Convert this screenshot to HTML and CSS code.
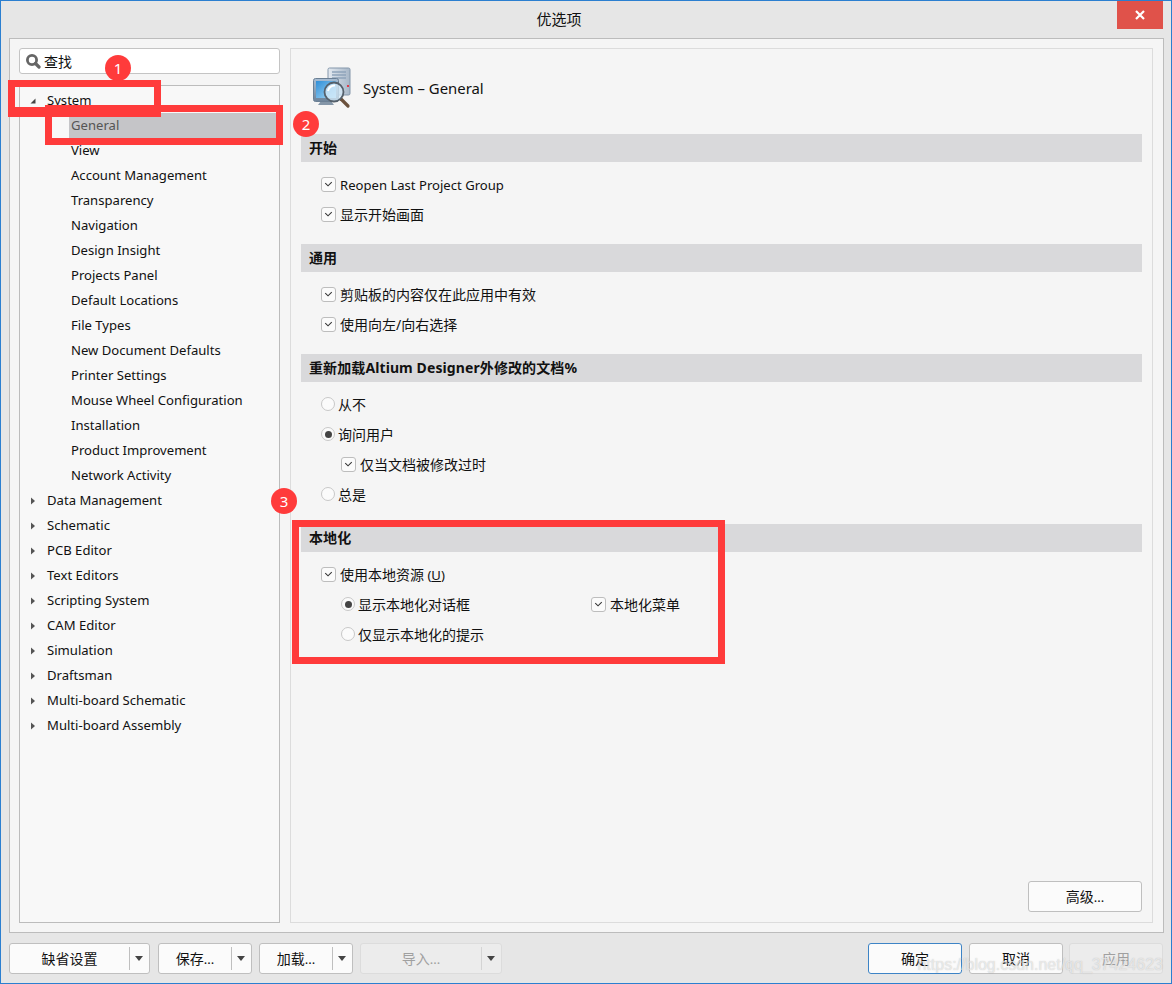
FILE: index.html
```html
<!DOCTYPE html>
<html lang="zh">
<head>
<meta charset="utf-8">
<title>优选项</title>
<link rel="stylesheet" href="styles.css">
</head>
<body>
<svg class="defs" width="0" height="0" aria-hidden="true">
  <defs>
    <symbol id="chk" viewBox="0 0 14 14"><path d="M3.5 5.5 L6.5 8.5 L10.5 4.500" fill="none" stroke="#333" stroke-width="1.1"/></symbol>
    <symbol id="tri" viewBox="0 0 8 8"><path d="M2 0.5 L6 4 L2 7.5 Z" fill="#555"/></symbol>
  </defs>
</svg>
<div class="window">
  <header class="titlebar">
    <div class="title">优选项</div>
    <button class="close" type="button" aria-label="close">
      <svg width="10" height="10" viewBox="0 0 10 10"><path d="M1 1 L9 9 M9 1 L1 9" stroke="#fff" stroke-width="2.2" fill="none"/></svg>
    </button>
  </header>
  <main class="panel">
    <aside class="left">
      <div class="search">
        <svg width="16" height="16" viewBox="0 0 16 16"><circle cx="7" cy="7" r="4.600" fill="none" stroke="#666" stroke-width="2.8"/><path d="M10.500 10.500 L14 14" stroke="#666" stroke-width="3.2" stroke-linecap="round"/></svg>
        <span>查找</span>
      </div>
      <nav class="tree">
        <div class="node"><svg class="arrow" width="8" height="8" viewBox="0 0 8 8"><path d="M6.5 1.5 V6.5 H1.5 Z" fill="#444"/></svg>System</div>
        <div class="leaf selected">General</div>
        <div class="leaf">View</div>
        <div class="leaf">Account Management</div>
        <div class="leaf">Transparency</div>
        <div class="leaf">Navigation</div>
        <div class="leaf">Design Insight</div>
        <div class="leaf">Projects Panel</div>
        <div class="leaf">Default Locations</div>
        <div class="leaf">File Types</div>
        <div class="leaf">New Document Defaults</div>
        <div class="leaf">Printer Settings</div>
        <div class="leaf">Mouse Wheel Configuration</div>
        <div class="leaf">Installation</div>
        <div class="leaf">Product Improvement</div>
        <div class="leaf">Network Activity</div>
        <div class="node"><svg class="arrow"><use href="#tri"/></svg>Data Management</div>
        <div class="node"><svg class="arrow"><use href="#tri"/></svg>Schematic</div>
        <div class="node"><svg class="arrow"><use href="#tri"/></svg>PCB Editor</div>
        <div class="node"><svg class="arrow"><use href="#tri"/></svg>Text Editors</div>
        <div class="node"><svg class="arrow"><use href="#tri"/></svg>Scripting System</div>
        <div class="node"><svg class="arrow"><use href="#tri"/></svg>CAM Editor</div>
        <div class="node"><svg class="arrow"><use href="#tri"/></svg>Simulation</div>
        <div class="node"><svg class="arrow"><use href="#tri"/></svg>Draftsman</div>
        <div class="node"><svg class="arrow"><use href="#tri"/></svg>Multi-board Schematic</div>
        <div class="node"><svg class="arrow"><use href="#tri"/></svg>Multi-board Assembly</div>
      </nav>
    </aside>
    <section class="right">
      <div class="page-head">
        <svg class="page-icon" width="44" height="44" viewBox="0 0 44 44">
          <defs>
            <linearGradient id="scr" x1="0" y1="0" x2="1" y2="1"><stop offset="0" stop-color="#2f8fd8"/><stop offset="1" stop-color="#a8d8f4"/></linearGradient>
            <linearGradient id="tower" x1="0" y1="0" x2="1" y2="0"><stop offset="0" stop-color="#e4eaf1"/><stop offset="1" stop-color="#a6b6c7"/></linearGradient>
            <linearGradient id="mon" x1="0" y1="0" x2="0" y2="1"><stop offset="0" stop-color="#a9bed4"/><stop offset="1" stop-color="#6d8399"/></linearGradient>
          </defs>
          <rect x="18" y="2" width="22" height="27" rx="1.5" fill="url(#tower)" stroke="#8396aa"/>
          <path d="M22 6 H36 M22 9 H36 M22 12 H36" stroke="#8ea4bb" stroke-width="1.3"/>
          <rect x="37" y="19" width="2" height="2" fill="#e23b4a"/>
          <path d="M11 35 H21 L24 39 H8 Z" fill="#8496a8"/>
          <rect x="3.500" y="12.500" width="25" height="23" rx="2" fill="url(#mon)" stroke="#6a7f94"/>
          <rect x="6" y="15" width="20" height="17" fill="url(#scr)"/>
          <path d="M31 33 L38 40" stroke="#6b513c" stroke-width="3.2" stroke-linecap="round"/>
          <circle cx="24" cy="26" r="9.500" fill="#d5ebfa" fill-opacity=".75" stroke="#55606b" stroke-width="1.8"/>
          <path d="M18 25 A6.500 6.500 0 0 1 25 19.500" fill="none" stroke="#fff" stroke-width="2"/>
        </svg>
        <span>System – General</span>
      </div>
      <div class="group">
        <h2 class="group-title">开始</h2>
        <div class="group-body">
          <label class="row latin-row"><span class="check"><svg><use href="#chk"/></svg></span><span class="latin">Reopen Last Project Group</span></label>
          <label class="row"><span class="check"><svg><use href="#chk"/></svg></span>显示开始画面</label>
        </div>
      </div>
      <div class="group">
        <h2 class="group-title">通用</h2>
        <div class="group-body">
          <label class="row"><span class="check"><svg><use href="#chk"/></svg></span>剪贴板的内容仅在此应用中有效</label>
          <label class="row"><span class="check"><svg><use href="#chk"/></svg></span>使用向左/向右选择</label>
        </div>
      </div>
      <div class="group">
        <h2 class="group-title">重新加载Altium Designer外修改的文档%</h2>
        <div class="group-body">
          <label class="row"><span class="radio"></span>从不</label>
          <label class="row"><span class="radio on"></span>询问用户</label>
          <label class="row sub"><span class="check"><svg><use href="#chk"/></svg></span>仅当文档被修改过时</label>
          <label class="row"><span class="radio"></span>总是</label>
        </div>
      </div>
      <div class="group">
        <h2 class="group-title">本地化</h2>
        <div class="group-body">
          <label class="row"><span class="check"><svg><use href="#chk"/></svg></span><span>使用本地资源<span class="latin"> (<u>U</u>)</span></span></label>
          <div class="split-row">
            <label class="row sub wide"><span class="radio on"></span>显示本地化对话框</label>
            <label class="row"><span class="check"><svg><use href="#chk"/></svg></span>本地化菜单</label>
          </div>
          <label class="row sub"><span class="radio"></span>仅显示本地化的提示</label>
        </div>
      </div>
      <div class="advanced-wrap"><button class="btn advanced" type="button">高级<span class="latin">...</span></button></div>
    </section>
  </main>
  <footer class="footer">
    <div class="btn split wide-split first"><span class="main">缺省设置</span><span class="caret"></span></div>
    <div class="btn split"><span class="main">保存<span class="latin">...</span></span><span class="caret"></span></div>
    <div class="btn split"><span class="main">加载<span class="latin">...</span></span><span class="caret"></span></div>
    <div class="btn split import disabled"><span class="main">导入<span class="latin">...</span></span><span class="caret"></span></div>
    <div class="spacer"></div>
    <button class="btn action primary" type="button">确定</button>
    <button class="btn action" type="button">取消</button>
    <button class="btn action disabled last" type="button">应用</button>
  </footer>
</div>

<div class="mark box-one"></div>
<div class="mark box-two"></div>
<div class="mark box-three"></div>
<div class="badge badge-one">1</div>
<div class="badge badge-two">2</div>
<div class="badge badge-three">3</div>
<div class="watermark">https://blog.csdn.net/qq_37424623</div>
</body>
</html>
```
FILE: styles.css
```css
* { box-sizing: border-box; }
html, body { margin: 0; padding: 0; }
body {
  width: 1172px;
  height: 984px;
  overflow: hidden;
  position: relative;
  font-family: "Noto Sans", "Noto Sans CJK SC", sans-serif;
  font-size: 14px;
  color: #111;
}
.defs { position: absolute; }
.latin { font-size: 13.1px; }
.window {
  width: 1172px;
  height: 984px;
  border: 1px solid #2b7fd0;
  background: #e6e6e6;
  display: flex;
  flex-direction: column;
}
.titlebar {
  height: 37px;
  display: flex;
  align-items: flex-start;
  padding-right: 8px;
  flex: none;
}
.title {
  flex: 1;
  text-align: center;
  line-height: 37px;
  font-size: 15px;
}
.close {
  width: 46px;
  height: 28px;
  border: 0;
  padding: 0;
  background: #e0524a;
  display: flex;
  align-items: center;
  justify-content: center;
}
.panel {
  margin: 0 7px 0 8px;
  height: 895px;
  flex: none;
  border: 1px solid #bcbcbc;
  background: #f5f5f5;
  padding: 9px 10px 9px 9px;
  display: flex;
  gap: 10px;
}
.left {
  width: 261px;
  flex: none;
  display: flex;
  flex-direction: column;
  gap: 11px;
}
.search {
  height: 26px;
  flex: none;
  border: 1px solid #c4c4c4;
  border-radius: 3px;
  background: #fff;
  display: flex;
  align-items: center;
  gap: 3px;
  padding: 0 0 1px 5px;
}
.tree {
  flex: 1;
  border: 1px solid #bcbcbc;
  background: #f8f8f8;
  padding-top: 2px;
  font-size: 13.1px;
}
.node, .leaf {
  height: 25px;
  line-height: 24px;
  white-space: nowrap;
}
.node {
  display: flex;
  align-items: center;
  padding: 0 0 1px 9px;
}
.arrow {
  width: 8px;
  height: 8px;
  margin: 1px 10px 0 0;
  flex: none;
}
.leaf {
  margin-left: 49px;
  padding-left: 2px;
}
.leaf.selected {
  background: #c5c5c8;
  color: #555;
}
.right {
  flex: 1;
  border: 1px solid #dcdcdc;
  background: #f5f5f5;
  padding: 0 10px 10px;
  display: flex;
  flex-direction: column;
}
.page-head {
  height: 85px;
  flex: none;
  display: flex;
  align-items: center;
  gap: 9px;
  padding: 0 0 7px 9px;
  font-size: 14.900px;
}
.page-icon { flex: none; }
.group { flex: none; padding-bottom: 14px; }
.group-title {
  margin: 0;
  height: 28px;
  line-height: 27px;
  background: #d9d9db;
  padding-left: 8px;
  font-size: 14px;
  font-weight: 700;
  letter-spacing: 0.1px;
}
.group-body { padding: 8px 0 0 20px; }
.row {
  height: 30px;
  display: flex;
  align-items: center;
  gap: 4px;
  padding-bottom: 2px;
  white-space: nowrap;
}
.row.latin-row { padding-bottom: 0; }
.row.latin-row .check { margin-bottom: 2px; }
.row.sub { padding-left: 20px; }
.split-row { display: flex; }
.row.wide { width: 270px; }
.check {
  width: 15px;
  height: 15px;
  flex: none;
  border: 1px solid #bdbdbd;
  border-radius: 3px;
  background: #fbfbfb;
  display: block;
}
.check svg { display: block; width: 13px; height: 13px; }
.radio {
  width: 14px;
  height: 14px;
  flex: none;
  border: 1px solid #c8c8c8;
  border-radius: 50%;
  background: #fbfbfb;
  margin-right: -1px;
  position: relative;
}
.radio.on::after {
  content: "";
  position: absolute;
  left: 2.500px;
  top: 2.500px;
  width: 7px;
  height: 7px;
  border-radius: 50%;
  background: #444;
}
.advanced-wrap {
  margin-top: auto;
  display: flex;
  justify-content: flex-end;
}
.btn {
  height: 31px;
  border: 1px solid #bfbfbf;
  border-radius: 3px;
  background: #fbfbfb;
  font: inherit;
  color: #111;
  padding: 0 0 2px;
}
.advanced { width: 114px; }
.footer {
  flex: 1;
  display: flex;
  align-items: flex-start;
  gap: 7px;
  padding: 10px 8px 0 8px;
}
.split { width: 94px; display: flex; align-items: center; padding: 0; }
.wide-split { width: 141px; }
.import { width: 142px; }
.first { margin-right: 1px; }
.main { flex: 1; text-align: center; padding-bottom: 2px; }
.caret {
  width: 20px;
  height: 23px;
  border-left: 1px solid #bfbfbf;
  position: relative;
  flex: none;
}
.caret::after {
  content: "";
  position: absolute;
  left: 5px;
  top: 9px;
  border-left: 4px solid transparent;
  border-right: 4px solid transparent;
  border-top: 5px solid #444;
}
.disabled {
  background: #ececec;
  border-color: #dcdcdc;
  color: #a0a0a0;
}
.disabled .caret { border-left-color: #d4d4d4; }
.spacer { flex: 1; }
.action { width: 94px; }
.primary { border-color: #3d84c6; }
.last { margin-left: -1px; }

.mark {
  position: absolute;
  border: 7px solid #ff3b3b;
}
.box-one { left: 8px; top: 80px; width: 153px; height: 37px; border-bottom-width: 10px; }
.box-two { left: 45px; top: 105px; width: 238px; height: 40px; }
.box-three { left: 292px; top: 520px; width: 433px; height: 144px; }
.badge {
  position: absolute;
  width: 26px;
  height: 26px;
  border-radius: 50%;
  background: #ff3b3b;
  color: #fff;
  text-align: center;
  line-height: 26px;
  font-size: 15px;
}
.badge-one { left: 105px; top: 55px; }
.badge-two { left: 293px; top: 111px; }
.badge-three { left: 271px; top: 488px; }
.watermark {
  position: absolute;
  right: 9px;
  top: 956px;
  font-family: "Liberation Sans", sans-serif;
  font-size: 16px;
  color: rgba(255, 255, 255, 0.6);
  text-shadow: 0 0 1px rgba(130, 130, 130, 0.5);
  white-space: nowrap;
}
```
